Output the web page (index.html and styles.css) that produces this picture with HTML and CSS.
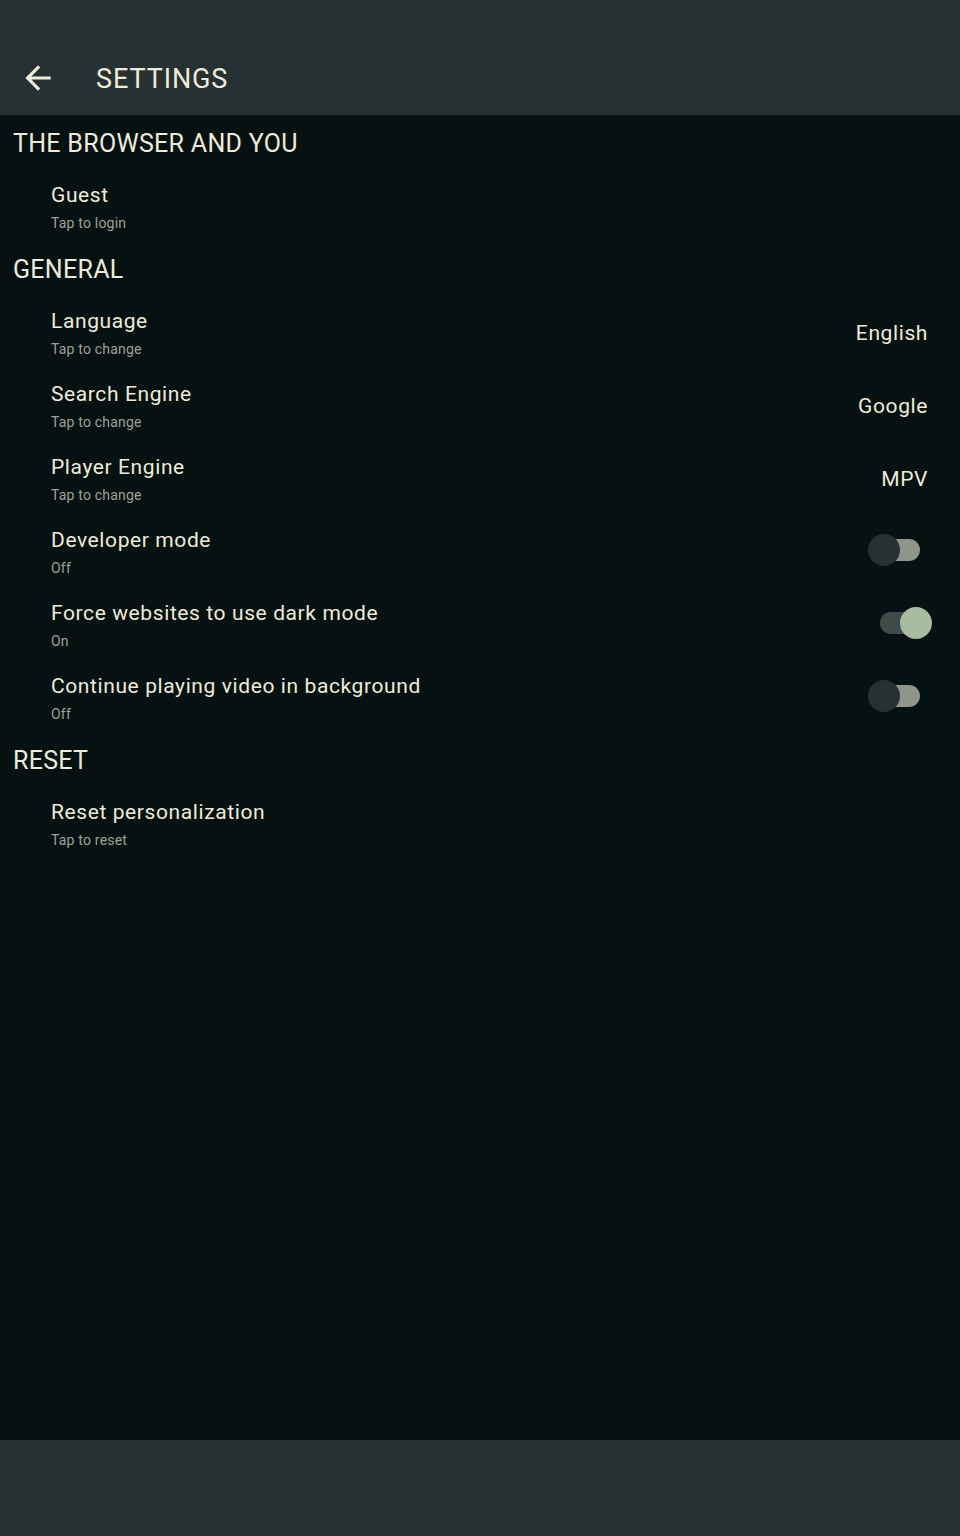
FILE: index.html
```html
<!DOCTYPE html>
<html>
<head>
<meta charset="utf-8">
<link rel="stylesheet" href="styles.css">
</head>
<body>
<div class="app">
  <header class="topbar">
    <svg class="back" viewBox="0 0 24 24" width="38" height="38"><path d="M20 11H7.83l5.59-5.59L12 4l-8 8 8 8 1.41-1.41L7.83 13H20v-2z" fill="currentColor"/></svg>
    <h1 class="title">SETTINGS</h1>
  </header>
  <main class="content">
    <section class="group">
      <h2 class="section-title">THE BROWSER AND YOU</h2>
      <div class="row">
        <div class="texts"><div class="row-title">Guest</div><div class="row-sub">Tap to login</div></div>
      </div>
    </section>
    <section class="group">
      <h2 class="section-title">GENERAL</h2>
      <div class="row">
        <div class="texts"><div class="row-title">Language</div><div class="row-sub">Tap to change</div></div>
        <div class="value">English</div>
      </div>
      <div class="row">
        <div class="texts"><div class="row-title">Search Engine</div><div class="row-sub">Tap to change</div></div>
        <div class="value">Google</div>
      </div>
      <div class="row">
        <div class="texts"><div class="row-title">Player Engine</div><div class="row-sub">Tap to change</div></div>
        <div class="value">MPV</div>
      </div>
      <div class="row">
        <div class="texts"><div class="row-title">Developer mode</div><div class="row-sub">Off</div></div>
        <div class="switch"><span class="track"></span><span class="thumb"></span></div>
      </div>
      <div class="row">
        <div class="texts"><div class="row-title">Force websites to use dark mode</div><div class="row-sub">On</div></div>
        <div class="switch on"><span class="track"></span><span class="thumb"></span></div>
      </div>
      <div class="row">
        <div class="texts"><div class="row-title">Continue playing video in background</div><div class="row-sub">Off</div></div>
        <div class="switch"><span class="track"></span><span class="thumb"></span></div>
      </div>
    </section>
    <section class="group">
      <h2 class="section-title">RESET</h2>
      <div class="row">
        <div class="texts"><div class="row-title">Reset personalization</div><div class="row-sub">Tap to reset</div></div>
      </div>
    </section>
  </main>
  <footer class="navbar"></footer>
</div>
</body>
</html>
```

FILE: styles.css
```css
* { box-sizing: border-box; }
html, body { margin: 0; padding: 0; }
body {
  font-family: Roboto, "Noto Sans", sans-serif;
  background: #061112;
  color: #efebd7;
}
.app {
  width: 960px;
  height: 1536px;
  display: flex;
  flex-direction: column;
}
.topbar {
  height: 115px;
  background: #263133;
  display: flex;
  align-items: center;
  padding-top: 42px;
  flex-shrink: 0;
}
.back {
  margin-left: 19px;
  margin-bottom: 1px;
  color: #efebd7;
  display: block;
}
.title {
  margin: 0 0 0 39px;
  font-size: 27px;
  font-weight: 400;
  line-height: 30px;
  letter-spacing: 0.9px;
}
.content {
  flex: 1;
  padding-top: 4px;
}
.group + .group {
  margin-top: 1px;
}
.section-title {
  margin: 0;
  padding: 10px 0 12px 13px;
  font-size: 25px;
  font-weight: 400;
  line-height: 30px;
  letter-spacing: 0.3px;
}
.row {
  height: 73px;
  display: flex;
  align-items: center;
  padding: 0 28px 0 51px;
}
.texts {
  flex: 1;
  padding-top: 10px;
  padding-bottom: 11px;
  align-self: stretch;
}
.row-title {
  font-size: 21px;
  line-height: 28px;
  letter-spacing: 0.6px;
}
.row-sub {
  margin-top: 4px;
  font-size: 14px;
  line-height: 20px;
  letter-spacing: 0.2px;
  color: #9fa196;
}
.value {
  font-size: 21px;
  line-height: 28px;
  letter-spacing: 0.6px;
  margin-right: 4px;
  margin-bottom: 2px;
}
.switch {
  position: relative;
  width: 64px;
  height: 32px;
  margin-bottom: 5px;
}
.track {
  position: absolute;
  left: 12px;
  top: 5px;
  width: 40px;
  height: 22px;
  border-radius: 11px;
  background: #8f9589;
}
.thumb {
  position: absolute;
  left: 0;
  top: 0;
  width: 32px;
  height: 32px;
  border-radius: 50%;
  background: #263132;
}
.switch.on .track { background: #3e4b48; }
.switch.on .thumb { left: 32px; background: #a9bca0; }
.navbar {
  height: 96px;
  background: #263132;
  flex-shrink: 0;
}
```
